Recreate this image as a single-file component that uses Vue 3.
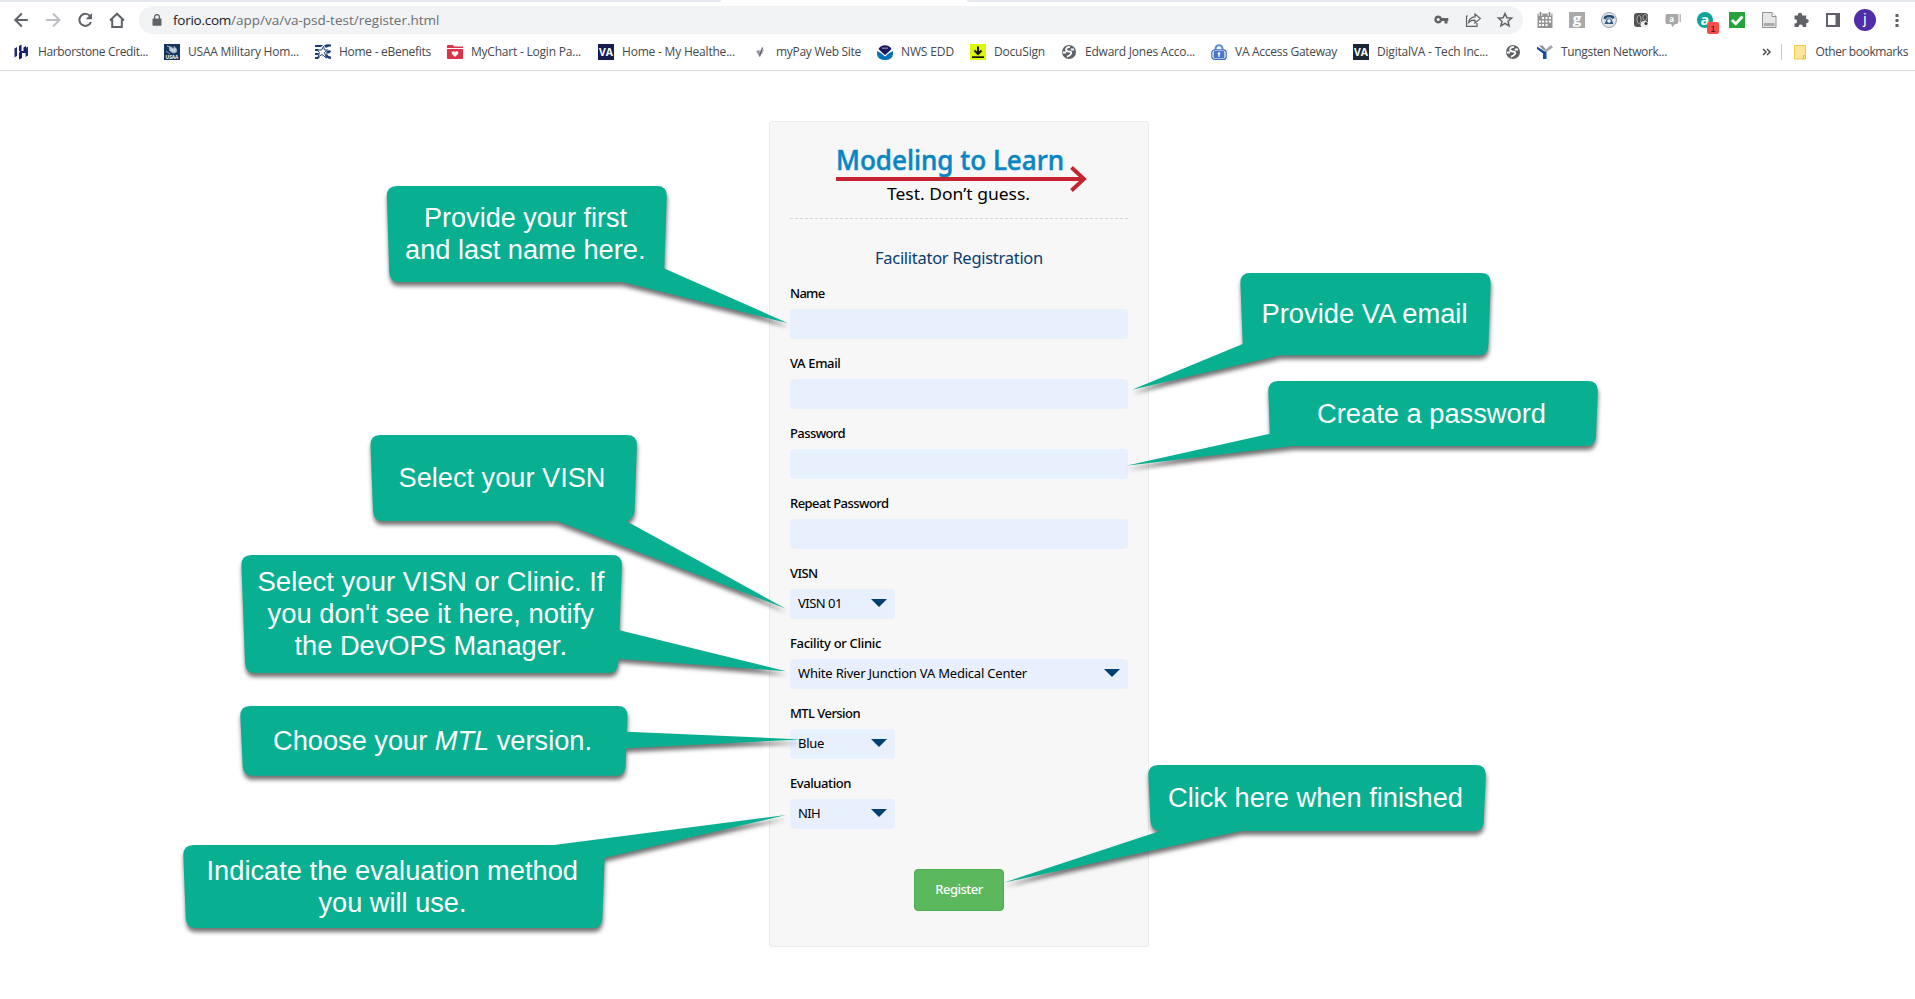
<script setup>
// Adjusts letter spacing so a label takes up exactly the given width.
const vFit = {
  mounted(el, { value }) {
    const natural = el.getBoundingClientRect().width
    const count = el.textContent.length
    if (count > 0) el.style.letterSpacing = (value - natural) / count + 'px'
  }
}

const bookmarks = [
  { icon: 'harbor', text: 'Harborstone Credit...', w: 110, cell: 150 },
  { icon: 'usaa', text: 'USAA Military Hom...', w: 111, cell: 151 },
  { icon: 'eben', text: 'Home - eBenefits', w: 92, cell: 132 },
  { icon: 'chart', text: 'MyChart - Login Pa...', w: 110, cell: 151 },
  { icon: 'va', text: 'Home - My Healthe...', w: 113, cell: 154 },
  { icon: 'mypay', text: 'myPay Web Site', w: 85, cell: 125 },
  { icon: 'noaa', text: 'NWS EDD', w: 53, cell: 93 },
  { icon: 'docu', text: 'DocuSign', w: 51, cell: 91 },
  { icon: 'globe', text: 'Edward Jones Acco...', w: 110, cell: 150 },
  { icon: 'gate', text: 'VA Access Gateway', w: 102, cell: 142 },
  { icon: 'va2', text: 'DigitalVA - Tech Inc...', w: 111, cell: 152 },
  { icon: 'globe', text: '', w: 0, cell: 32 },
  { icon: 'tung', text: 'Tungsten Network...', w: 106, cell: 150 }
]

const fields = [
  { label: 'Name', w: 34.5 },
  { label: 'VA Email', w: 50.5 },
  { label: 'Password', w: 55 },
  { label: 'Repeat Password', w: 98.5 },
  { label: 'VISN', w: 27.5, value: 'VISN 01', vw: 44 },
  { label: 'Facility or Clinic', w: 91, value: 'White River Junction VA Medical Center', vw: 229, wide: true },
  { label: 'MTL Version', w: 70, value: 'Blue', vw: 26 },
  { label: 'Evaluation', w: 61, value: 'NIH', vw: 22 }
]

const callouts = [
  {
    d: 'M397 186H657Q667 186 666.8 196L664.3 268.5L788 323.2L622 282H399Q389.5 282 389.2 272L386.8 196Q386.8 186 397 186Z',
    lines: [['Provide your first', 424, 227, 203], ['and last name here.', 405, 259, 240.500]]
  },
  {
    d: 'M1250 273H1481Q1491 273 1490.7 283L1488.4 345.5Q1488 355.3 1478.5 355.3H1280L1132 389.7L1242.7 344L1240.4 283Q1240.3 273 1250 273Z',
    lines: [['Provide VA email', 1261.5, 322.5, 206]]
  },
  {
    d: 'M1278 381H1588Q1598 381 1597.8 391L1596 436Q1595.5 446 1586 446H1293L1126 465.7L1269.8 433.7L1268.3 391Q1268.3 381 1278 381Z',
    lines: [['Create a password', 1317, 422.5, 229]]
  },
  {
    d: 'M380 435H627Q637 435 636.9 445L634.6 511Q634 517 627 521.5L785.5 608.5L557 521H383Q373.3 521 373 511L370.5 445Q370.5 435 380 435Z',
    lines: [['Select your VISN', 398.5, 487, 207]]
  },
  {
    d: 'M251.5 555H612Q622 555 621.9 565L619.6 630.3L786 671.2L618.7 658.7L618.3 663Q618 673 608 673H255Q245.3 673 245 663L241.4 565Q241.4 555 251.5 555Z',
    lines: [['Select your VISN or Clinic. If', 257.5, 591, 347], ["you don't see it here, notify", 267.5, 623, 326.5], ['the DevOPS Manager.', 294.5, 655, 272.5]]
  },
  {
    d: 'M250 706H617.5Q627.6 706 627.5 716L627 731.7L801 739.4L626.2 748.3L625.6 766Q625.4 775.8 615.5 775.8H252.5Q243 775.8 242.7 766L240.3 716Q240.3 706 250 706Z',
    lines: []
  },
  {
    d: 'M193.5 845H554L786 815L604.6 857.7L602.4 918Q602 928 592.5 928H196Q186 928 185.7 918L183.3 855Q183.3 845 193.5 845Z',
    lines: [['Indicate the evaluation method', 206.5, 880, 371.5], ['you will use.', 318.5, 912, 148]]
  },
  {
    d: 'M1158 765H1476Q1486 765 1485.8 775L1483.7 822Q1483.3 831 1473.5 831H1241L1003.5 882.7L1160 831Q1151 830 1150.4 821L1148.3 775Q1148.3 765 1158 765Z',
    lines: [['Click here when finished', 1168, 806.5, 295]]
  }
]
</script>

<template>
  <div class="screen">
    <header class="browser">
      <div class="tabs"><i class="tab-left"></i><i class="tab-right"></i></div>
      <div class="toolbar">
        <div class="nav">
          <svg viewBox="0 0 32 32"><path d="M28 16H16.3M22 9.5L15.5 16l6.5 6.5" transform="translate(-.2)" class="ln" /></svg>
          <svg viewBox="0 0 32 32"><path d="M14 16H26.7M21 9.5l6.5 6.5-6.5 6.5" class="ln pale" /></svg>
          <svg viewBox="0 0 32 32"><path d="M26.3 12.4A6 6 0 1 0 27 18" class="ln" /><path d="M28 9v6.3h-6.3z" fill="#5f6368" /></svg>
          <svg viewBox="0 0 32 32"><path d="M14 16.5L21 9.7l7 6.8M16.2 15.5V23h9.6v-7.500" class="ln" /></svg>
        </div>
        <div class="omnibox">
          <svg class="lock" viewBox="0 0 10 12"><path d="M1 4.500H9Q9.500 4.500 9.500 5V11Q9.500 11.700 8.800 11.700H1.200Q.5 11.700.5 11V5Q.5 4.500 1 4.500Z" fill="#5f6368" /><path d="M2.600 5V3a2.400 2.400 0 0 1 4.800 0V5" fill="none" stroke="#5f6368" stroke-width="1.300" /></svg>
          <span class="url"><b v-fit="58">forio.com</b><span v-fit="208.500">/app/va/va-psd-test/register.html</span></span>
          <svg class="cell" viewBox="0 0 32 28"><path d="M13.500 9.500a4 4 0 1 0 3.500 5.600h2.500v2.400h3v-2.400h.8v-3.200H17a4 4 0 0 0-3.500-2.400zm-.3 2.600a1.500 1.500 0 1 1 0 3 1.500 1.500 0 0 1 0-3z" fill="#5f6368" fill-rule="evenodd" /></svg>
          <svg class="cell" viewBox="0 0 32 28"><path d="M11 10H9.500v10.300H20V17" class="th" /><path d="M11.500 16.500q1-5.500 6.500-5.700V8l5.300 4.600L18 17v-2.800q-4-.2-6.500 2.300z" class="th" /></svg>
          <svg class="cell" viewBox="0 0 32 28"><path d="M16 7.500l1.900 4.300 4.700.4-3.600 3.100 1.100 4.600-4.100-2.500-4.100 2.500 1.100-4.600-3.600-3.100 4.700-.4z" fill="none" stroke="#5f6368" stroke-width="1.500" /></svg>
        </div>
        <div class="exts">
          <svg viewBox="0 0 32 32"><path d="M8.500 9.500h15v14.500h-15z" fill="#949494" /><path d="M13 13h2v2h-2zm3.500 0h2v2h-2zm3.500 0h2v2h-2zm-10 3.500h2v2h-2zm3 0h2v2h-2zm3.500 0h2v2h-2zm3.500 0h2v2h-2zm-10 3.500h2v2h-2zm3 0h2v2h-2zm3.500 0h2v2h-2z" fill="#fff" /><path d="M11.500 8v4M20.500 8v4" stroke="#fff" stroke-width="3.600" /><path d="M11.500 8v4M20.500 8v4" stroke="#808080" stroke-width="1.600" /></svg>
          <svg viewBox="0 0 32 32"><path d="M8 8h16v16H8z" fill="#aaa" /><text x="16" y="20" class="ic" font-size="15" fill="#fff">g</text></svg>
          <svg viewBox="0 0 32 32"><circle cx="16" cy="16" r="7.500" fill="#dfe4ec" stroke="#9ba1ab" /><path d="M10.500 14.500q0-3.300 5.500-3.500t5.500 3l-2 1-1.500-1.500h-4L12.500 15.500z" fill="#244778" /><path d="M14 14.500h4l2.500 5.500h-9z" fill="#315887" /><circle cx="16" cy="17" r="1.800" fill="#fff" /></svg>
          <svg viewBox="0 0 32 32"><rect x="9" y="9" width="14" height="14" rx="3" fill="#565656" /><ellipse cx="14" cy="15.500" rx="2" ry="4" fill="#444" stroke="#aaa" /><ellipse cx="20" cy="13.500" rx="2" ry="3" fill="#444" stroke="#aaa" /><ellipse cx="19.500" cy="20.500" rx="4" ry="3.500" fill="#eee" /><circle cx="21" cy="19.500" r="1.500" fill="#333" /></svg>
          <svg viewBox="0 0 32 32"><path d="M20 10h4v8h-4z" fill="#bcbcbc" /><path d="M22 10v8" stroke="#fff" /><path d="M10 10H19.500q1.500 0 1.500 1.500v7q0 1.500-1.500 1.500H18l-2.500 3-1.500-3h-4q-1.500 0-1.500-1.500v-7q0-1.500 1.500-1.500z" fill="#a8a8a8" /><text x="14.700" y="18" class="ic" font-size="8" fill="#fff">a</text></svg>
          <svg viewBox="0 0 32 32"><circle cx="16" cy="16" r="8" fill="#0aa597" /><text x="15.800" y="20.500" class="ic" font-size="14.500" fill="#fff">a</text><rect x="18" y="18" width="12" height="12" rx="2" fill="#fb4b4b" /><text x="24" y="27.500" class="ic arial" font-size="9.500" fill="#222">1</text></svg>
          <svg viewBox="0 0 32 32"><path d="M8 8h16v16H8z" fill="#25a43a" /><path d="M11 16l3.700 3.800 6.800-7.300" fill="none" stroke="#fff" stroke-width="2.800" /></svg>
          <svg viewBox="0 0 32 32"><path d="M9.500 8.500h9.500l4 4v11H9.500z" fill="#e7e7e7" stroke="#929292" /><path d="M19 8.500v4h4" fill="#fff" stroke="#929292" /><path d="M11 19h10.500v3H11z" fill="#aaa" /></svg>
          <svg viewBox="0 0 32 32"><path d="M9.500 11.500h3.300V11a2.200 2.200 0 0 1 4.400 0v.5h4V15h.5a2.100 2.100 0 0 1 0 4.200h-.5V23h-3.500v-.5a2 2 0 0 0-4 0v.5H9.500v-3.500h.5a2.100 2.100 0 0 0 0-4.200h-.5z" fill="#5f6368" /></svg>
          <svg viewBox="0 0 32 32"><path d="M10 10h12v12H10z" fill="#fff" stroke="#5f6368" stroke-width="2" /><path d="M18.500 9H23v14h-4.500z" fill="#5f6368" /></svg>
          <svg viewBox="0 0 32 32"><circle cx="16" cy="16" r="11" fill="#512da8" /><text x="16" y="20" class="ic roboto" font-size="14" fill="#fff">j</text></svg>
          <svg viewBox="0 0 32 32"><path d="M14.500 10h3v3h-3zm0 5h3v3h-3zm0 5h3v3h-3z" fill="#5f6368" /></svg>
        </div>
      </div>
      <nav class="bookmarks">
        <div v-for="(b, i) in bookmarks" :key="i" class="bm" :style="{ width: b.cell + 'px' }">
          <svg viewBox="0 0 16 16">
            <g v-if="b.icon === 'harbor'"><path d="M.5 4.500L3 3v9L.5 13.500zM11.500 4L14 2.500v9L11.500 13z" fill="#222a80" /><path d="M5 2l2.500-1.500V7h2V3.500L12 2v7H8v5l-3 1.500V9l1-2H5z" fill="#171b72" /></g>
            <g v-else-if="b.icon === 'usaa'"><path d="M0 0h16v16H0z" fill="#14365e" /><path d="M3 2l2.500 1v3.500L9 9l3.500-1V5L10 2.500V5L7 3zM2 7l4 3" fill="#c3d0dc" stroke="#9fb2c5" stroke-width=".8" /><text x="8" y="15" class="ic" font-size="4.800" fill="#fff">USAA</text></g>
            <g v-else-if="b.icon === 'eben'"><path d="M0 1h8L6 3H0zm0 4h3l2 2H0zm0 4h4l-1 2H0zm0 4h5l-2 2H0z" fill="#1d3b78" /><path d="M8.500 2.500L9.500 6h3l-3 2.500 2 5.500-4.500-3.500L3 13l1.500-4.500L2 6h4.500z" fill="#fff" stroke="#1d3b78" /><path d="M9 1.500Q12-.5 16 .5v2q-3-.5-5 1.500m.500 3.500Q15 5 16 7.500q-1 2.500-4 2 .5 3 4 3v2.500q-3 0-5-2" fill="#1d3b78" /></g>
            <g v-else-if="b.icon === 'chart'"><path d="M0 2q0-1 1-1h5l1 1.500h9V4H0zM0 5h16v9q0 1-1 1H1q-1 0-1-1z" fill="#dc3348" /><path d="M8 13L4.800 9.800Q4.200 7.500 6 7.200 7.400 7 8 8.200 8.600 7 10 7.200q1.800.3 1.200 2.600z" fill="#fff" /></g>
            <g v-else-if="b.icon === 'va' || b.icon === 'va2'"><path d="M0 0h16v16H0z" :fill="b.icon === 'va' ? '#171c50' : '#182638'" /><text x="8" y="12" class="ic" font-size="10.500" fill="#fff" textLength="14" lengthAdjust="spacingAndGlyphs">VA</text></g>
            <g v-else-if="b.icon === 'mypay'"><path d="M4 7.500q3-2 5-1l3-1-1.500 4-4 2z" fill="#b3b3bb" /><path d="M10.500 3.500l-3 9" stroke="#545575" stroke-width="1.200" /><path d="M5.500 6.500l2.500 4.500" stroke="#777" /></g>
            <g v-else-if="b.icon === 'noaa'"><circle cx="8" cy="8" r="7.800" fill="#fff" /><path d="M1.500 5a7.500 7.500 0 0 1 13 0L11 8.500 8 11 5 8.500z" fill="#1a1960" /><path d="M0 7q5 2 8 5.500 3-3.500 8-5.500 1 9-8 9T0 7z" fill="#0872b9" /><path d="M5 4.200h6" stroke="#8088b8" stroke-width="1.300" /></g>
            <g v-else-if="b.icon === 'docu'"><path d="M0 0h16v16H0z" fill="#dcf808" /><path d="M8 2.500v7M4.500 6.500L8 10l3.500-3.500" fill="none" stroke="#111" stroke-width="2" /><path d="M2 12.300h12v1.700H2z" fill="#111" /></g>
            <g v-else-if="b.icon === 'globe'"><circle cx="8" cy="8" r="7" fill="#5f6368" /><path d="M9 2.800Q5.200 3 5 5.800q.5 2 3.500 1.800 2.500.2 1.500 2.400-1.500 2-4 2.600M13 5.500H9.800M1.800 8.500H5" fill="none" stroke="#fff" stroke-width="1.800" /></g>
            <g v-else-if="b.icon === 'gate'"><path d="M4.500 7V4.500Q5 1.200 8 1.200t3.500 3.300V7" fill="none" stroke="#5d91d3" stroke-width="2" /><rect x=".8" y="5.800" width="14.400" height="9.600" rx="3" fill="#fff" stroke="#4168b5" stroke-width="1.200" /><rect x="2.600" y="7" width="10.800" height="7.200" rx="1" fill="#4677c4" /><circle cx="8" cy="9.500" r="1.300" fill="#fff" /><path d="M7.400 10h1.200v3H7.400z" fill="#fff" /></g>
            <g v-else><path d="M2 1.500l3.500 0L9 5.500l-2 1z" fill="#8b8d91" /><path d="M7.500 6.500L14 1l2 2.500-7 5z" fill="#a8aaad" /><path d="M0 2.500L7 7l2.500 1v7H6V9.500L0 5z" fill="#164f9f" /></g>
          </svg>
          <span v-if="b.text" v-fit="b.w">{{ b.text }}</span>
        </div>
        <div class="others">
          <svg class="more" viewBox="0 0 10 10"><path d="M1 2l3 3-3 3M5 2l3 3-3 3" fill="none" stroke="#4b4f53" stroke-width="1.500" /></svg>
          <i class="sep"></i>
          <svg class="folder" viewBox="0 0 12 15"><path d="M.5.500h11v10h-1.500v3.500H.5z" fill="#ffe69a" stroke="#eecb50" /><path d="M9.500 10.500h2v3.500h-2z" fill="#ffe69a" stroke="#e8b93d" /></svg>
          <span v-fit="92.500">Other bookmarks</span>
        </div>
      </nav>
    </header>

    <main class="page">
      <form class="panel" @submit.prevent>
        <svg class="logo" viewBox="0 0 338 76">
          <text x="46" y="28" class="brand" textLength="228" lengthAdjust="spacingAndGlyphs">Modeling to Learn</text>
          <path d="M46 37H294M281.500 25.500L294 37l-12.500 11.500" fill="none" stroke="#c4242f" stroke-width="3.800" />
          <text x="97" y="58" class="motto" textLength="143" lengthAdjust="spacingAndGlyphs">Test. Don’t guess.</text>
        </svg>
        <h1><span v-fit="168">Facilitator Registration</span></h1>
        <div v-for="f in fields" :key="f.label" class="field">
          <label><span v-fit="f.w">{{ f.label }}</span></label>
          <div class="box" :class="{ short: f.value && !f.wide }">
            <span v-if="f.value" v-fit="f.vw">{{ f.value }}</span>
            <i v-if="f.value" class="caret"></i>
          </div>
        </div>
        <button type="submit"><span v-fit="47.500">Register</span></button>
      </form>
    </main>

    <svg class="callouts" viewBox="0 0 1915 999">
      <defs>
        <filter id="shade" filterUnits="userSpaceOnUse" x="0" y="0" width="1915" height="999" color-interpolation-filters="sRGB">
          <feDropShadow dx="0.500" dy="4" stdDeviation="2.200" flood-color="#000" flood-opacity="0.550" />
        </filter>
      </defs>
      <g v-for="(c, i) in callouts" :key="i">
        <path :d="c.d" fill="#08af91" filter="url(#shade)" />
        <text v-for="l in c.lines" :key="l[0]" :x="l[1]" :y="l[2]" :textLength="l[3]" lengthAdjust="spacingAndGlyphs">{{ l[0] }}</text>
      </g>
      <text x="273" y="750" textLength="319" lengthAdjust="spacingAndGlyphs">Choose your <tspan font-style="italic">MTL</tspan> version.</text>
    </svg>
  </div>
</template>

<style>
body { margin: 0; background: #fff; overflow: hidden; }
</style>

<style scoped>
.screen { position: relative; width: 1915px; height: 999px; background: #fff; overflow: hidden; }
.browser { height: 70px; border-bottom: 1px solid #d9dadc; font-family: "Open Sans", "Noto Sans", sans-serif; }
.tabs { height: 2px; display: flex; justify-content: space-between; }
.tabs i { background: #e4e8ec; height: 2px; }
.tab-left { width: 721px; border-bottom-right-radius: 2px; }
.tab-right { width: 948px; border-bottom-left-radius: 2px; }
.toolbar { height: 36px; display: flex; align-items: center; }
.nav { display: flex; width: 139px; }
.nav svg { width: 32px; height: 32px; flex: none; }
.ln { fill: none; stroke: #5f6368; stroke-width: 2; }
.pale { stroke: #bcbec1; }
.omnibox { width: 1384px; height: 28px; border-radius: 14px; background: #f1f3f4; display: flex; align-items: center; }
.lock { width: 10px; height: 12px; margin-left: 13px; }
.url { flex: 1; margin-left: 11px; font-size: 13.5px; line-height: 28px; color: #6a6e73; white-space: nowrap; display: flex; }
.url b { font-weight: 400; color: #202124; }
.cell { width: 32px; height: 28px; }
.omnibox .cell:last-child { margin-right: 2px; }
.th { fill: none; stroke: #5f6368; stroke-width: 1.2; }
.exts { display: flex; margin-left: 6px; }
.exts svg { width: 32px; height: 32px; }
.ic { font-family: "Open Sans", sans-serif; font-weight: 700; text-anchor: middle; }
.arial { font-family: "Liberation Sans", sans-serif; font-weight: 400; }
.roboto { font-family: Roboto, sans-serif; font-weight: 400; }
.bookmarks { height: 28px; display: flex; align-items: center; padding-left: 14px; font-size: 12px; color: #45484c; white-space: nowrap; }
.bm { display: flex; align-items: center; gap: 8px; flex: none; }
.bm svg { width: 16px; height: 16px; flex: none; }
.bm span, .others span { flex: none; line-height: 16px; padding-bottom: 1px; }
.others { display: flex; align-items: center; margin-left: auto; padding-right: 7px; }
.more { width: 10px; height: 10px; margin-right: 1px; }
.sep { width: 1px; height: 16px; background: #c5c8cb; margin: 0 12px 0 8px; }
.folder { width: 12px; height: 15px; margin-right: 10px; }
.page { padding: 50px 0 0 769px; font-family: "Noto Sans", "Open Sans", sans-serif; }
.panel { box-sizing: border-box; width: 380px; height: 826px; border: 1px solid #ebebeb; border-radius: 3px; background: #f7f7f7; padding: 20px; display: flex; flex-direction: column; }
.logo { width: 338px; height: 76px; flex: none; }
.brand { font-family: "Noto Sans"; font-weight: 500; font-size: 27px; fill: #0786c3; stroke: #0786c3; stroke-width: .5px; }
.motto { font-family: "Noto Sans"; font-size: 17px; fill: #000; }
h1 { margin: 0; height: 50px; padding-top: 28px; box-sizing: border-box; line-height: 24px; font-size: 16.5px; font-weight: 400; color: #0b3c6d; text-align: center; white-space: nowrap; background: repeating-linear-gradient(90deg, #d4d4d4 0 3px, transparent 3px 5px) 0 0 / 100% 1px no-repeat; }
.field { height: 70px; flex: none; }
.field:first-of-type { margin-top: 1px; }
label { display: block; height: 40px; padding-top: 14px; box-sizing: border-box; line-height: 20px; font-size: 13px; font-weight: 500; color: #000; white-space: nowrap; }
.box { height: 30px; border-radius: 4px; background: #e8f0fe; box-sizing: border-box; padding: 0 8px; display: flex; justify-content: space-between; line-height: 28px; font-size: 13px; color: #000; white-space: nowrap; }
.short { width: 105px; }
.caret { margin-top: 10px; border: 8px solid transparent; border-top-color: #003f72; border-bottom: 0; height: 0; }
button { margin: 40px auto 0; width: 90px; height: 42px; border: 1px solid #4cae4c; border-radius: 4px; background: #5cb85c; color: #fff; font: 500 13px/20px "Noto Sans", sans-serif; padding: 0 0 2px; white-space: nowrap; }
h1 span, label span, button span { display: inline-block; }
.callouts { position: absolute; left: 0; top: 0; width: 1915px; height: 999px; }
.callouts text { font-family: "Liberation Sans", Arial, sans-serif; font-size: 27px; fill: #fff; }
</style>
